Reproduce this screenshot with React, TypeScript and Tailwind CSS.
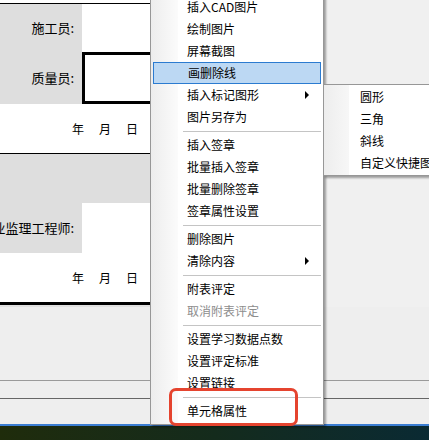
import { ReactNode } from "react";

const FONT = "font-['Noto_Sans_CJK_SC','Noto_Sans',sans-serif]";

type Entry =
  | { kind: "item"; label: string; active?: boolean; disabled?: boolean; sub?: boolean }
  | { kind: "sep" };

const menu: Entry[] = [
  { kind: "item", label: "插入CAD图片" },
  { kind: "item", label: "绘制图片" },
  { kind: "item", label: "屏幕截图" },
  { kind: "item", label: "画删除线", active: true },
  { kind: "item", label: "插入标记图形", sub: true },
  { kind: "item", label: "图片另存为" },
  { kind: "sep" },
  { kind: "item", label: "插入签章" },
  { kind: "item", label: "批量插入签章" },
  { kind: "item", label: "批量删除签章" },
  { kind: "item", label: "签章属性设置" },
  { kind: "sep" },
  { kind: "item", label: "删除图片" },
  { kind: "item", label: "清除内容", sub: true },
  { kind: "sep" },
  { kind: "item", label: "附表评定" },
  { kind: "item", label: "取消附表评定", disabled: true },
  { kind: "sep" },
  { kind: "item", label: "设置学习数据点数" },
  { kind: "item", label: "设置评定标准" },
  { kind: "item", label: "设置链接" },
  { kind: "sep" },
  { kind: "item", label: "单元格属性" },
];

const submenu = ["圆形", "三角", "斜线", "自定义快捷图形"];

function LabelCell({ children, thick }: { children: ReactNode; thick?: boolean }) {
  return (
    <div className="flex h-full">
      <div className="flex w-[82px] shrink-0 items-center justify-end overflow-hidden whitespace-nowrap bg-[#dedede] pr-[8px] text-[13px] text-black">
        {children}
      </div>
      {thick ? (
        <div className="h-full w-[120px] shrink-0 border-[3px] border-black bg-white" />
      ) : (
        <div className="h-full flex-1 bg-white" />
      )}
    </div>
  );
}

function DateRow() {
  return (
    <div className="flex h-full items-center justify-end gap-[15px] bg-white pr-[13px] text-[12px] text-black">
      <span>年</span>
      <span>月</span>
      <span>日</span>
    </div>
  );
}

export default function App() {
  return (
    <div className={`relative h-[440px] w-[429px] overflow-hidden bg-[#f0f0f0] ${FONT}`}>
      {/* sheet underneath */}
      <div className="flex h-[307px]">
        <div className="flex w-[151px] shrink-0 flex-col overflow-hidden bg-white">
          <div className="h-[3px] shrink-0" />
          <div className="h-px shrink-0 bg-black" />
          <div className="h-[48px] shrink-0">
            <LabelCell>施工员:</LabelCell>
          </div>
          <div className="h-[52px] shrink-0">
            <LabelCell thick>质量员:</LabelCell>
          </div>
          <div className="h-[49px] shrink-0">
            <DateRow />
          </div>
          <div className="h-px shrink-0 bg-black" />
          <div className="h-[49px] shrink-0 bg-[#dedede]" />
          <div className="h-[50px] shrink-0">
            <LabelCell>专业监理工程师:</LabelCell>
          </div>
          <div className="h-[49px] shrink-0">
            <DateRow />
          </div>
          <div className="h-[3px] shrink-0 bg-black" />
          <div className="h-[3px] shrink-0 bg-[#e0e0e0]" />
        </div>
        <div className="flex-1 bg-[#f0f0f0]" />
      </div>
      <div className="h-[73px] bg-[#eeeeee]" />
      <div className="h-px bg-[#9a9a9a]" />
      <div className="h-[17px] bg-[#eeeeee]" />
      <div className="h-px bg-[#666666]" />
      <div className="h-[25px] bg-[#eeeeee]" />
      <div className="h-[2px] bg-[#3b7dd2]" />
      <div className="h-[14px] bg-gradient-to-r from-[#1f2c0b] via-[#142b1c] to-[#0a2a33]" />

      {/* context menu */}
      <div className="absolute left-[150px] top-[-7px] w-[174px] border border-[#979797] bg-white px-[2px] pb-[2px] pt-[2px] shadow-[2px_2px_2px_rgba(0,0,0,0.35)]">
        <div className="pointer-events-none absolute bottom-0 left-0 top-0 w-[27px] bg-gradient-to-r from-[#ededed] to-[#fbfbfb]" />
        {menu.map((e, i) =>
          e.kind === "sep" ? (
            <div key={i} className="relative flex h-[6px] items-center pl-[30px]">
              <div className="h-px flex-1 bg-[#c4c4c4]" />
            </div>
          ) : (
            <div
              key={i}
              className={`relative flex h-[22px] items-center whitespace-nowrap pl-[34px] text-[12px] ${
                e.active ? "border border-[#2b7bd0] bg-[#bcd8f3] pl-[33px]" : ""
              } ${e.disabled ? "text-[#8d8d8d]" : "text-black"}`}
            >
              {e.label}
              {e.sub && (
                <span className="absolute right-[12px] top-[7px] h-0 w-0 border-y-[4px] border-l-[4px] border-y-transparent border-l-black" />
              )}
            </div>
          )
        )}
      </div>

      {/* submenu */}
      <div className="absolute left-[323px] top-[84px] w-[130px] border border-[#979797] bg-white py-[1px] shadow-[2px_2px_2px_rgba(0,0,0,0.35)]">
        <div className="pointer-events-none absolute bottom-0 left-0 top-0 w-[25px] bg-gradient-to-r from-[#ededed] to-[#f7f7f7]" />
        {submenu.map((s) => (
          <div key={s} className="relative flex h-[22px] items-center whitespace-nowrap pl-[36px] text-[12px] text-black">
            {s}
          </div>
        ))}
      </div>

      {/* highlight annotation */}
      <div className="absolute left-[169px] top-[388px] h-[38px] w-[129px] rounded-[7px] border-[3px] border-[#e5442f]" />
    </div>
  );
}
